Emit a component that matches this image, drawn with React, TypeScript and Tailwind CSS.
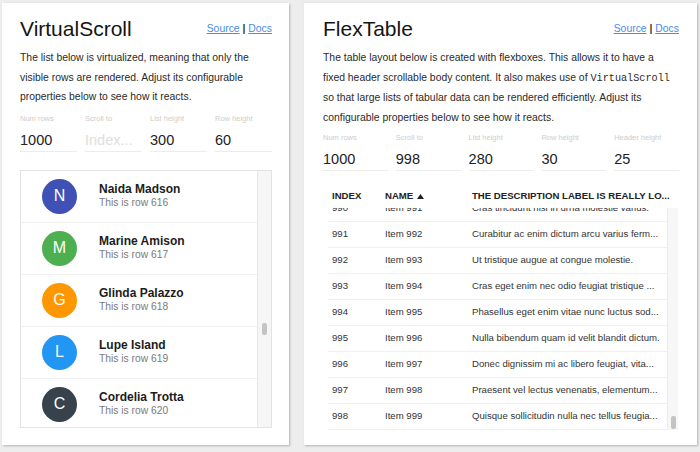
import React from "react"

const people = [
  { letter: "N", name: "Naida Madson", row: 616, color: "bg-[#3f51b5]" },
  { letter: "M", name: "Marine Amison", row: 617, color: "bg-[#4caf50]" },
  { letter: "G", name: "Glinda Palazzo", row: 618, color: "bg-[#ff9800]" },
  { letter: "L", name: "Lupe Island", row: 619, color: "bg-[#2196f3]" },
  { letter: "C", name: "Cordelia Trotta", row: 620, color: "bg-[#37424d]" },
]

const tableRows = [
  [990, "Cras tincidunt nisl in urna molestie varius."],
  [991, "Curabitur ac enim dictum arcu varius ferm..."],
  [992, "Ut tristique augue at congue molestie."],
  [993, "Cras eget enim nec odio feugiat tristique ..."],
  [994, "Phasellus eget enim vitae nunc luctus sod..."],
  [995, "Nulla bibendum quam id velit blandit dictum."],
  [996, "Donec dignissim mi ac libero feugiat, vita..."],
  [997, "Praesent vel lectus venenatis, elementum..."],
  [998, "Quisque sollicitudin nulla nec tellus feugia..."],
] as const

function Header({ title }: { title: string }) {
  return (
    <div className="flex items-center justify-between h-[28px]">
      <h1 className="text-[21px] leading-[28px] font-normal text-[#151515]">{title}</h1>
      <div className="text-[10.4px] text-[#333]">
        <a className="text-[#4a8de6] underline">Source</a>
        <span className="font-bold"> | </span>
        <a className="text-[#4a8de6] underline">Docs</a>
      </div>
    </div>
  )
}

function Field({ label, value, placeholder }: { label: string, value?: string, placeholder?: string }) {
  return (
    <div className="flex flex-col">
      <label className="text-[7.5px] leading-[10px] text-[#cdcdcd]">{label}</label>
      <input
        readOnly
        defaultValue={value}
        placeholder={placeholder}
        className="mt-[5px] h-[23px] w-full bg-transparent outline-none border-b border-[#ececec] text-[14.5px] text-[#222] placeholder:text-[#dedede]"
      />
    </div>
  )
}

function VirtualScrollCard() {
  return (
    <div className="w-[287px] h-[442px] bg-white shadow-[1px_1px_2px_rgba(0,0,0,0.25)] pl-[18px] pr-[17px] pt-[12px]">
      <Header title="VirtualScroll" />
      <p className="mt-[5px] text-[10.4px] leading-[19.5px] text-[#2a2a2a]">
        The list below is virtualized, meaning that only the<br />
        visible rows are rendered. Adjust its configurable<br />
        properties below to see how it reacts.
      </p>
      <div className="mt-[7px] grid grid-cols-4 gap-x-[8px]">
        <Field label="Num rows" value="1000" />
        <Field label="Scroll to" placeholder="Index..." />
        <Field label="List height" value="300" />
        <Field label="Row height" value="60" />
      </div>
      <div className="mt-[18px] h-[258px] border border-[#e3e3e3] flex overflow-hidden">
        <div className="flex-1 overflow-hidden">
          {people.map(p => (
            <div key={p.row} className="h-[52px] shrink-0 flex items-center pl-[21px] border-b border-[#efefef]">
              <div className={`w-[35px] h-[35px] rounded-full ${p.color} flex items-center justify-center text-white text-[16px]`}>
                {p.letter}
              </div>
              <div className="ml-[22px] flex flex-col">
                <span className="text-[12px] leading-[14px] font-bold text-[#1c1c1c]">{p.name}</span>
                <span className="text-[10.3px] leading-[14px] text-[#7a7a7a]">This is row {p.row}</span>
              </div>
            </div>
          ))}
        </div>
        <div className="w-[14px] bg-[#f6f6f6] border-l border-[#e8e8e8] flex justify-center">
          <div className="mt-[152px] w-[5px] h-[12px] rounded-[2px] bg-[#c4c4c4]" />
        </div>
      </div>
    </div>
  )
}

function FlexTableCard() {
  return (
    <div className="w-[393px] h-[442px] bg-white shadow-[1px_1px_2px_rgba(0,0,0,0.25)] pl-[19px] pr-[18px] pt-[12px]">
      <Header title="FlexTable" />
      <p className="mt-[5px] text-[10.4px] leading-[19.5px] text-[#2a2a2a] whitespace-nowrap">
        The table layout below is created with flexboxes. This allows it to have a<br />
        fixed header scrollable body content. It also makes use of <code className="font-['Liberation_Mono',monospace] text-[10.2px]">VirtualScroll</code><br />
        so that large lists of tabular data can be rendered efficiently. Adjust its<br />
        configurable properties below to see how it reacts.
      </p>
      <div className="mt-[6px] grid grid-cols-5 gap-x-[8px]">
        <Field label="Num rows" value="1000" />
        <Field label="Scroll to" value="998" />
        <Field label="List height" value="280" />
        <Field label="Row height" value="30" />
        <Field label="Header height" value="25" />
      </div>
      <div className="mt-[14px] ml-[5px] w-[350px]">
        <div className="h-[23px] flex items-center text-[9.6px] font-bold uppercase text-[#222] whitespace-nowrap">
          <div className="w-[57px] pl-[4px]">Index</div>
          <div className="w-[87px] flex items-center gap-[4px]">
            Name
            <svg width="7" height="5" viewBox="0 0 7 5"><path d="M0 5 L3.5 0 L7 5 Z" fill="#222" /></svg>
          </div>
          <div className="flex-1">The description label is really lo...</div>
        </div>
        <div className="h-[222px] flex">
          <div className="flex-1 overflow-hidden">
            <div className="mt-[-12px]">
              {tableRows.map(([i, desc]) => (
                <div key={i} className="h-[26px] flex items-center border-b border-[#efefef] text-[9.6px] text-[#333] whitespace-nowrap">
                  <div className="w-[57px] pl-[4px]">{i}</div>
                  <div className="w-[87px]">Item {i + 1}</div>
                  <div className="flex-1 overflow-hidden">{desc}</div>
                </div>
              ))}
            </div>
          </div>
          <div className="w-[11px] bg-[#f7f7f7] border-l border-[#ececec] flex justify-center">
            <div className="mt-[208px] w-[5px] h-[13px] rounded-[2px] bg-[#c4c4c4]" />
          </div>
        </div>
      </div>
    </div>
  )
}

export default function App() {
  return (
    <div className="w-[700px] h-[452px] bg-[#ededed] flex gap-[15px] pl-[2px] pt-[3px] font-['Liberation_Sans',Arial,sans-serif] overflow-hidden">
      <VirtualScrollCard />
      <FlexTableCard />
    </div>
  )
}
